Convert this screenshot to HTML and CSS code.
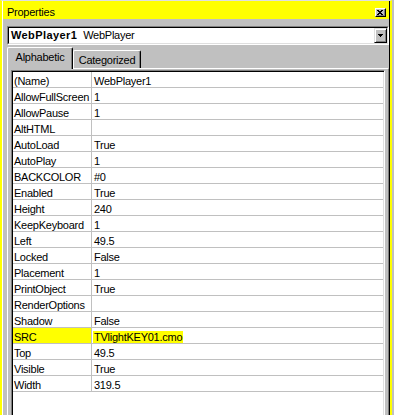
FILE: index.html
```html
<!DOCTYPE html>
<html lang="en">
<head>
  <meta charset="UTF-8" />
  <title>Properties</title>
  <link rel="stylesheet" href="styles.css">
</head>
<body>
  <div class="window">
    <div class="frame">
      <div class="titlebar">
        <span class="title">Properties</span>
        <span class="close-btn">
          <svg width="6" height="5" viewBox="0 0 6 5" shape-rendering="crispEdges">
            <path d="M0 0h2v1h2V0h2v1H5v1H4v1h1v1h1v1H4V4H2v1H0V4h1V3h1V2H1V1H0z" fill="#000"/>
          </svg>
        </span>
      </div>

      <div class="combo">
        <div class="combo-field">
          <div class="combo-text"><span class="obj-name">WebPlayer1</span>WebPlayer</div>
          <span class="drop-btn">
            <svg width="5" height="3" viewBox="0 0 5 3" shape-rendering="crispEdges">
              <path d="M0 0h5v1H4v1H3v1H2V2H1V1H0z" fill="#000"/>
            </svg>
          </span>
        </div>
      </div>

      <div class="tabs">
        <div class="tab active">Alphabetic</div>
        <div class="tab">Categorized</div>
      </div>

      <div class="panel">
        <div class="grid">
          <div class="row"><div class="name">(Name)</div><div class="value">WebPlayer1</div></div>
          <div class="row"><div class="name">AllowFullScreen</div><div class="value">1</div></div>
          <div class="row"><div class="name">AllowPause</div><div class="value">1</div></div>
          <div class="row"><div class="name">AltHTML</div><div class="value"></div></div>
          <div class="row"><div class="name">AutoLoad</div><div class="value">True</div></div>
          <div class="row"><div class="name">AutoPlay</div><div class="value">1</div></div>
          <div class="row"><div class="name">BACKCOLOR</div><div class="value">#0</div></div>
          <div class="row"><div class="name">Enabled</div><div class="value">True</div></div>
          <div class="row"><div class="name">Height</div><div class="value">240</div></div>
          <div class="row"><div class="name">KeepKeyboard</div><div class="value">1</div></div>
          <div class="row"><div class="name">Left</div><div class="value">49.5</div></div>
          <div class="row"><div class="name">Locked</div><div class="value">False</div></div>
          <div class="row"><div class="name">Placement</div><div class="value">1</div></div>
          <div class="row"><div class="name">PrintObject</div><div class="value">True</div></div>
          <div class="row"><div class="name">RenderOptions</div><div class="value"></div></div>
          <div class="row"><div class="name">Shadow</div><div class="value">False</div></div>
          <div class="row selected"><div class="name">SRC</div><div class="value"><span class="hl">TVlightKEY01.cmo</span></div></div>
          <div class="row"><div class="name">Top</div><div class="value">49.5</div></div>
          <div class="row"><div class="name">Visible</div><div class="value">True</div></div>
          <div class="row"><div class="name">Width</div><div class="value">319.5</div></div>
        </div>
      </div>
    </div>
  </div>
</body>
</html>
```

FILE: styles.css
```css
* {
  box-sizing: border-box;
}

body {
  margin: 0;
  background-color: #c0c0c0;
  font-family: "Liberation Sans", Arial, sans-serif;
  font-size: 11px;
  letter-spacing: -0.25px;
  color: #000;
  overflow: hidden;
}

.window {
  width: 392px;
  height: 415px;
  border-top: 1px solid #dfdfdf;
  border-left: 2px solid #ffff00;
  border-right: 2px solid #ffff00;
}

.frame {
  height: 100%;
  display: flex;
  flex-direction: column;
  border-left: 1px solid #fff;
  border-right: 1px solid #000;
}

/* title bar */
.titlebar {
  height: 18px;
  flex-shrink: 0;
  background-color: #ffff00;
  display: flex;
  justify-content: space-between;
  align-items: flex-start;
  padding: 5px 3px 0 4px;
  line-height: 12px;
}

.close-btn {
  width: 11px;
  height: 9px;
  margin-top: 2px;
  background-color: #c0c0c0;
  border-top: 1px solid #fff;
  border-left: 1px solid #fff;
  border-right: 1px solid #000;
  border-bottom: 1px solid #000;
  box-shadow: inset -1px -1px #808080;
  display: flex;
  align-items: center;
  justify-content: center;
  padding: 0 1px 1px 0;
}

.close-btn svg,
.drop-btn svg {
  display: block;
}

/* object combo */
.combo {
  height: 19px;
  flex-shrink: 0;
  margin: 7px 0 0 4px;
  display: flex;
  border-top: 1px solid #808080;
  border-left: 1px solid #808080;
  border-right: 1px solid #fff;
  border-bottom: 1px solid #fff;
}

.combo-field {
  flex: 1;
  display: flex;
  background-color: #fff;
  border-top: 1px solid #000;
  border-left: 1px solid #000;
  border-right: 1px solid #dfdfdf;
  border-bottom: 1px solid #dfdfdf;
}

.combo-text {
  flex: 1;
  padding-left: 2px;
  line-height: 15px;
  white-space: nowrap;
}

.obj-name {
  font-weight: bold;
  letter-spacing: 0.4px;
  margin-right: 6px;
}

.drop-btn {
  width: 13px;
  height: 15px;
  background-color: #c0c0c0;
  border-top: 1px solid #dfdfdf;
  border-left: 1px solid #dfdfdf;
  border-right: 1px solid #000;
  border-bottom: 1px solid #000;
  box-shadow: inset 1px 1px #fff, inset -1px -1px #808080;
  display: flex;
  align-items: center;
  justify-content: center;
}

/* tabs */
.tabs {
  height: 21px;
  flex-shrink: 0;
  margin: 2px 0 0 4px;
  display: flex;
  align-items: flex-end;
  position: relative;
  z-index: 1;
}

.tab {
  width: 68px;
  height: 18px;
  padding-top: 3px;
  line-height: 12px;
  text-align: center;
  background-color: #c0c0c0;
  border-top: 1px solid #fff;
  border-left: 1px solid #fff;
  border-right: 1px solid #000;
  box-shadow: inset -1px 0 #808080;
  border-radius: 2px 2px 0 0;
}

.tab.active {
  width: 66px;
  height: 22px;
  margin-bottom: -1px;
}

/* property grid */
.panel {
  flex: 1;
  min-height: 0;
  margin-left: 4px;
  padding: 1px 3px 0 3px;
  display: flex;
  flex-direction: column;
  border-top: 1px solid #fff;
  border-left: 1px solid #fff;
  border-right: 1px solid #808080;
}

.grid {
  flex: 1;
  overflow: hidden;
  background-color: #fff;
  padding: 1px 1px 0 1px;
  border-top: 1px solid #808080;
  border-left: 1px solid #808080;
  border-right: 1px solid #fff;
  box-shadow: inset 1px 1px #000, inset -1px 0 #dfdfdf;
}

.row {
  height: 16px;
  display: flex;
  border-bottom: 1px solid #c0c0c0;
}

.name {
  width: 79px;
  padding: 3px 0 0 1px;
  line-height: 12px;
  white-space: nowrap;
  overflow: hidden;
  border-right: 1px solid #c0c0c0;
}

.value {
  flex: 1;
  padding: 3px 0 0 2px;
  line-height: 12px;
  white-space: nowrap;
}

.row.selected .name {
  background-color: #ffff00;
}

.hl {
  background-color: #ffff00;
  margin-left: -1px;
  padding: 0 1px;
}
```
